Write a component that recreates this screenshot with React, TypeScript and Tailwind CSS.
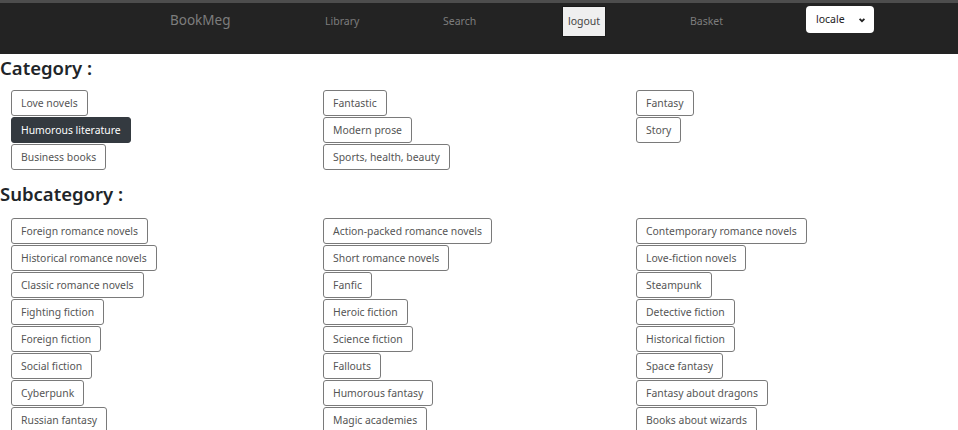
import React from "react";

const categories: string[][] = [
  ["Love novels", "Humorous literature", "Business books"],
  ["Fantastic", "Modern prose", "Sports, health, beauty"],
  ["Fantasy", "Story"],
];

const subcategories: string[][] = [
  [
    "Foreign romance novels",
    "Historical romance novels",
    "Classic romance novels",
    "Fighting fiction",
    "Foreign fiction",
    "Social fiction",
    "Cyberpunk",
    "Russian fantasy",
  ],
  [
    "Action-packed romance novels",
    "Short romance novels",
    "Fanfic",
    "Heroic fiction",
    "Science fiction",
    "Fallouts",
    "Humorous fantasy",
    "Magic academies",
  ],
  [
    "Contemporary romance novels",
    "Love-fiction novels",
    "Steampunk",
    "Detective fiction",
    "Historical fiction",
    "Space fantasy",
    "Fantasy about dragons",
    "Books about wizards",
  ],
];

function Chip({ label, active }: { label: string; active?: boolean }) {
  return (
    <button
      className={
        "h-[26px] mb-[1px] px-[9px] rounded-[3px] border text-[10.4px] leading-none whitespace-nowrap " +
        (active
          ? "bg-[#343a40] border-[#343a40] text-white"
          : "bg-white border-[#7a7a7a] text-[#555]")
      }
    >
      {label}
    </button>
  );
}

function Columns({ cols, active }: { cols: string[][]; active?: string }) {
  return (
    <div className="grid grid-cols-[312px_313px_313px] pl-[11px]">
      {cols.map((col, i) => (
        <div key={i} className="flex flex-col items-start">
          {col.map((c) => (
            <Chip key={c} label={c} active={c === active} />
          ))}
        </div>
      ))}
    </div>
  );
}

export default function App() {
  return (
    <div className="min-h-[430px] bg-white font-['Noto_Sans','Open_Sans',sans-serif]">
      <div className="h-[3px] bg-[#4d4d4d]" />
      <nav className="h-[51px] bg-[#232323] flex items-start pt-[3px] pl-[170px]">
        <span className="mt-[5px] w-[155px] text-[13.5px] leading-[18px] text-[#7d7d7d]">
          BookMeg
        </span>
        <span className="mt-[8px] w-[118px] text-[10.5px] leading-[14px] text-[#7d7d7d]">Library</span>
        <span className="mt-[8px] w-[119px] text-[10.5px] leading-[14px] text-[#7d7d7d]">Search</span>
        <div className="w-[128px]">
          <button className="h-[31px] w-[44px] bg-[#efefef] text-[10.5px] text-[#444] border border-[#1a1a1a]">
            logout
          </button>
        </div>
        <span className="mt-[8px] w-[116px] text-[10.5px] leading-[14px] text-[#7d7d7d]">Basket</span>
        <div className="h-[27px] w-[68px] bg-white rounded-[4px] flex items-center justify-between pl-[10px] pr-[8px]">
          <span className="text-[10.5px] text-[#222]">locale</span>
          <svg width="8" height="8" viewBox="0 0 10 10">
            <path d="M2 3.5 L5 6.5 L8 3.5" fill="none" stroke="#222" strokeWidth="2.2" />
          </svg>
        </div>
      </nav>
      <h2 className="mt-[1px] h-[31px] text-[18.5px] leading-[26px] font-semibold text-[#212529]">
        Category :
      </h2>
      <div className="mt-[4px]">
        <Columns cols={categories} active="Humorous literature" />
      </div>
      <h2 className="mt-[10px] h-[31px] text-[18.5px] leading-[26px] font-semibold text-[#212529]">
        Subcategory :
      </h2>
      <div className="mt-[6px]">
        <Columns cols={subcategories} />
      </div>
    </div>
  );
}
